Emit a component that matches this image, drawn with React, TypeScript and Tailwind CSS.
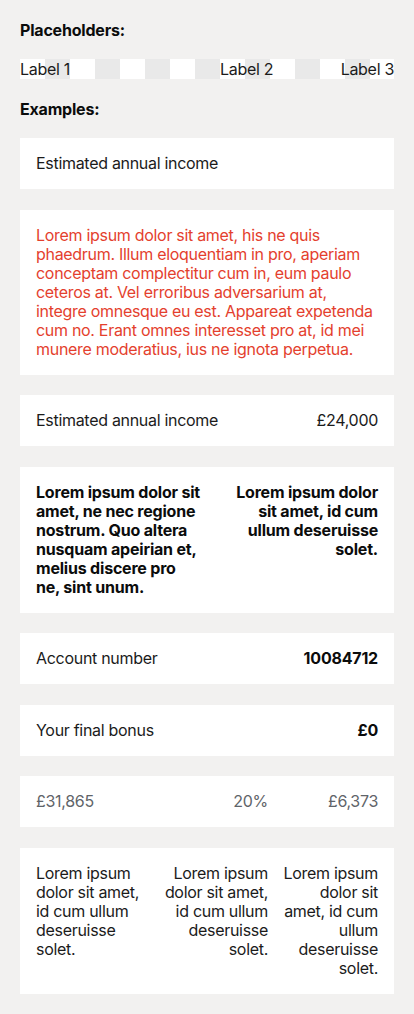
import React from "react";

function Card({ children, className = "" }: { children: React.ReactNode; className?: string }) {
  return <div className={`bg-white px-4 py-4 ${className}`}>{children}</div>;
}

export default function App() {
  return (
    <div className="min-h-[1014px] bg-[#f2f1f0] px-5 pt-[21px] pb-5 text-[16px] leading-[19px] tracking-[-0.3px] text-[#1b1b1b] [font-family:Inter,'Noto_Sans',sans-serif]">
      <h2 className="font-bold tracking-[-0.2px] text-[#0b0c0c]">Placeholders:</h2>
      <div className="mt-[19px] flex h-5 items-center bg-[repeating-linear-gradient(90deg,#ffffff_0px,#ffffff_25px,#e9e9e9_25px,#e9e9e9_50px)]">
        <span className="w-[200px]">Label 1</span>
        <span>Label 2</span>
        <span className="ml-auto">Label 3</span>
      </div>
      <h2 className="mt-[21px] font-bold tracking-[-0.2px] text-[#0b0c0c]">Examples:</h2>

      <div className="mt-[19px] flex flex-col gap-[20.5px]">
        <Card>
          <p>Estimated annual income</p>
        </Card>

        <Card>
          <p className="text-[#e43f2e]">
            Lorem ipsum dolor sit amet, his ne quis phaedrum. Illum eloquentiam in pro, aperiam conceptam complectitur cum in, eum paulo ceteros at. Vel erroribus adversarium at, integre omnesque eu est. Appareat expetenda cum no. Erant omnes interesset pro at, id mei munere moderatius, ius ne ignota perpetua.
          </p>
        </Card>

        <Card className="flex justify-between">
          <span>Estimated annual income</span>
          <span>£24,000</span>
        </Card>

        <Card className="grid grid-cols-[168px_1fr] gap-x-4 font-bold tracking-[-0.2px] text-[#0b0c0c]">
          <p>
            Lorem ipsum dolor sit amet, ne nec regione nostrum. Quo altera nusquam apeirian et, melius discere pro
            <br />
            ne, sint unum.
          </p>
          <p className="text-right">Lorem ipsum dolor sit amet, id cum ullum deseruisse solet.</p>
        </Card>

        <Card className="flex justify-between">
          <span>Account number</span>
          <span className="font-bold tracking-[-0.2px] text-[#0b0c0c]">10084712</span>
        </Card>

        <Card className="flex justify-between">
          <span>Your final bonus</span>
          <span className="font-bold tracking-[-0.2px] text-[#0b0c0c]">£0</span>
        </Card>

        <Card className="grid grid-cols-[112px_108px_98px] gap-x-3 text-[#5f6469]">
          <span>£31,865</span>
          <span className="text-right">20%</span>
          <span className="text-right">£6,373</span>
        </Card>

        <Card className="grid grid-cols-[112px_108px_98px] gap-x-3">
          <p>Lorem ipsum dolor sit amet, id cum ullum deseruisse solet.</p>
          <p className="text-right">Lorem ipsum dolor sit amet, id cum ullum deseruisse solet.</p>
          <p className="text-right">Lorem ipsum dolor sit amet, id cum ullum deseruisse solet.</p>
        </Card>
      </div>
    </div>
  );
}
